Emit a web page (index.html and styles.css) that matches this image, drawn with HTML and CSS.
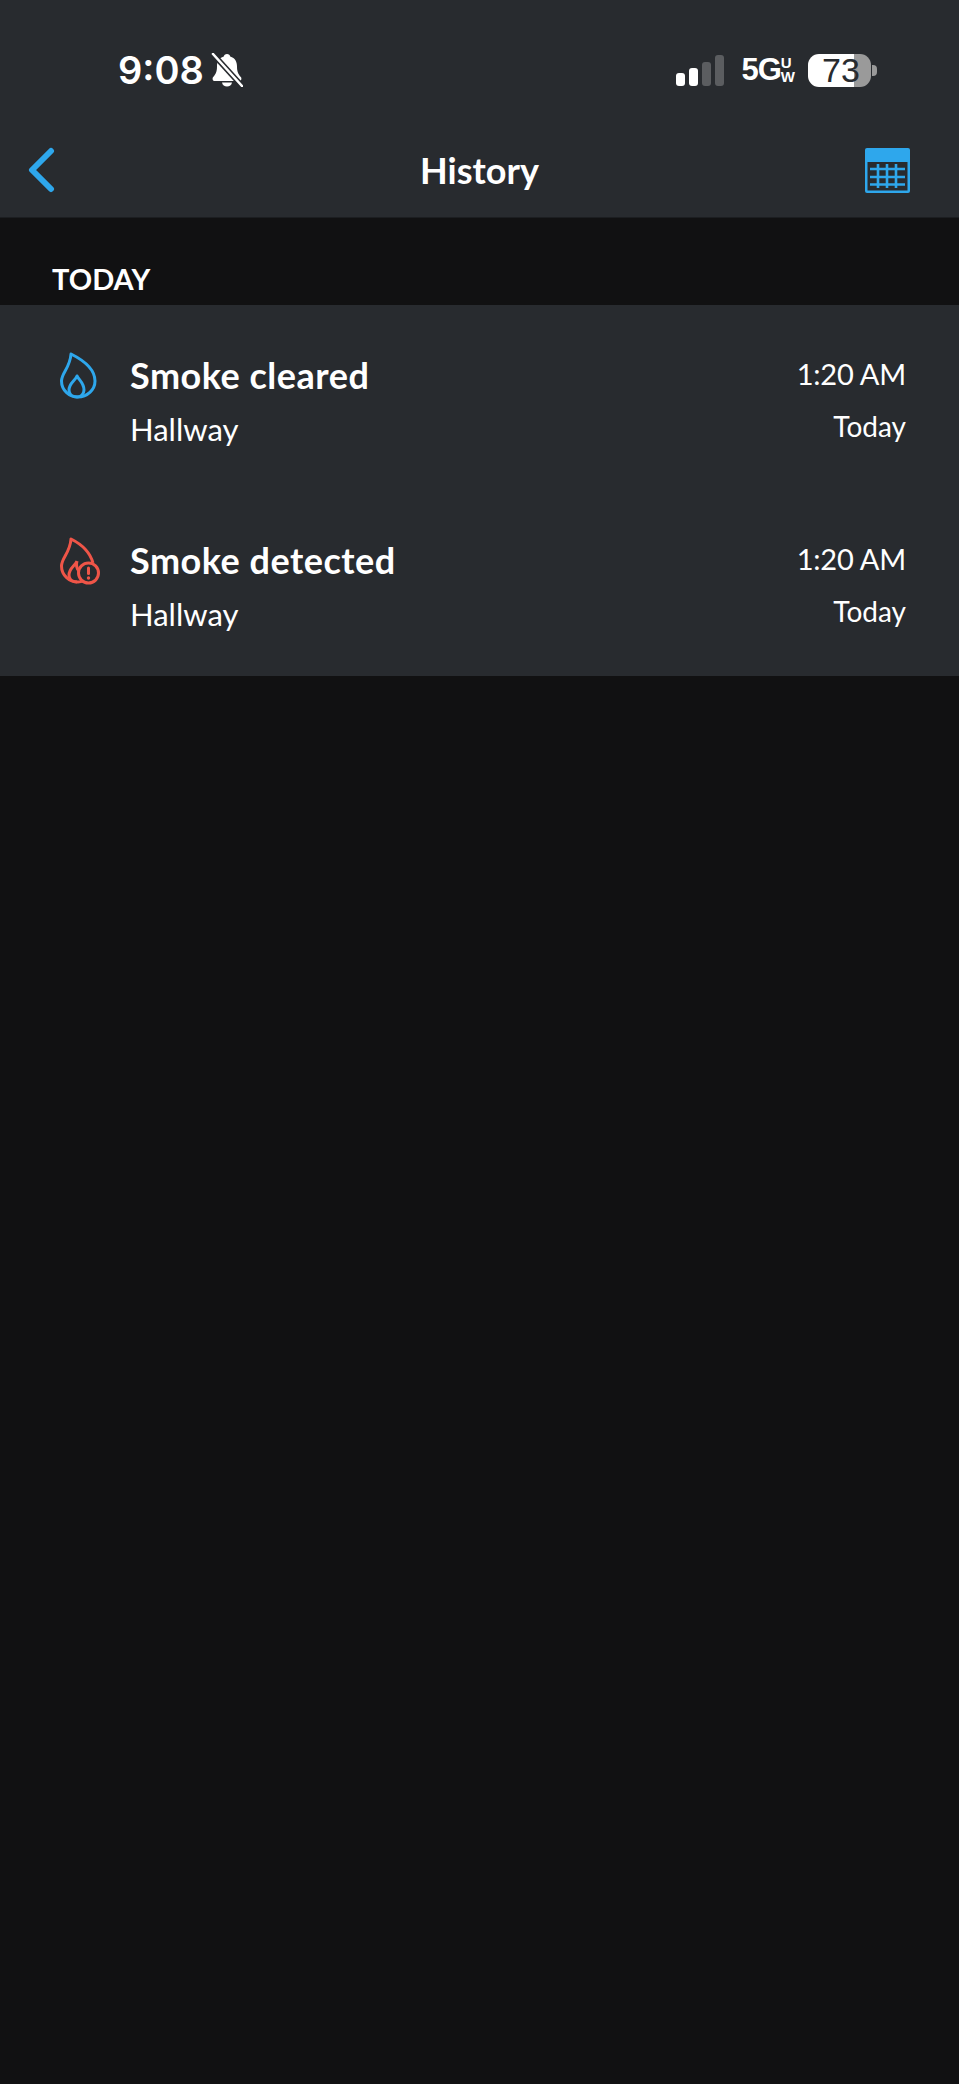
FILE: index.html
```html
<!DOCTYPE html>
<html lang="en">
<head>
  <meta charset="UTF-8">
  <meta name="viewport" content="width=device-width, initial-scale=1.0">
  <title>History</title>
  <link rel="stylesheet" href="styles.css">
</head>
<body>
  <header class="top">
    <div class="status">
      <div class="status-left">
        <span class="clock">9:08</span>
        <svg class="bell" viewBox="0 0 32 34" width="32" height="34">
          <path d="M16 1c-1.800 0-3 1-3.200 2.600C7.800 5 6 9 6 13.500c0 5-1.200 7.500-3.800 10.500C1 25.500 1.700 28 3.500 28h25c1.800 0 2.500-2.500 1.300-4C27.200 21 26 18.500 26 13.500c0-4.500-1.800-8.500-6.800-9.900C19 2 17.800 1 16 1z" fill="#fff"/>
          <path d="M11 29.500h10c-.4 2.400-2.400 4-5 4s-4.600-1.600-5-4z" fill="#fff"/>
          <path d="M2 1l29 32" stroke="#282b2f" stroke-width="5.500"/>
          <path d="M2 1l29 32" stroke="#fff" stroke-width="2.600" stroke-linecap="round"/>
        </svg>
      </div>
      <div class="status-right">
        <div class="signal">
          <span class="bar bar-1"></span>
          <span class="bar bar-2"></span>
          <span class="bar bar-3"></span>
          <span class="bar bar-4"></span>
        </div>
        <div class="network">
          <span class="network-main">5G</span>
          <span class="network-small"><span>U</span><span>W</span></span>
        </div>
        <div class="battery">
          <div class="battery-body"><span class="battery-level">73</span></div>
          <span class="battery-nub"></span>
        </div>
      </div>
    </div>
    <nav class="nav">
      <svg class="back" viewBox="0 0 28 46" width="28" height="46">
        <path d="M24 4L5 23l19 19" fill="none" stroke="#2ea7ec" stroke-width="6" stroke-linecap="round" stroke-linejoin="round"/>
      </svg>
      <h1 class="nav-title">History</h1>
      <svg class="calendar" viewBox="0 0 45 45" width="45" height="45">
        <rect x="0" y="0" width="45" height="45" rx="2" fill="#2ea7ec"/>
        <rect x="2.500" y="14" width="40" height="28.500" fill="#282b2f"/>
        <path d="M5 21h35M5 29h35M5 36.500h35M13 16v24M22 16v24M31 16v24" stroke="#2ea7ec" stroke-width="2.600" fill="none"/>
      </svg>
    </nav>
  </header>

  <h2 class="section-title">TODAY</h2>

  <ul class="events">
    <li class="event">
      <svg class="event-icon" viewBox="0 0 44 50" width="44" height="50">
        <path d="M14 4C24 9 38 18 38 31C38 40 30 47 21 47C12 47 4.500 40 4.500 31C4.500 23 13 18 14 4Z" fill="none" stroke="#2ea7ec" stroke-width="3" stroke-linejoin="round"/>
        <path d="M20 26C22 30 27 33 27 40C27 44 24 47 20 47C15 47 12 44 12 40C12 33 18 31 20 26Z" fill="none" stroke="#2ea7ec" stroke-width="3" stroke-linejoin="round"/>
      </svg>
      <div class="event-main">
        <div class="event-name">Smoke cleared</div>
        <div class="event-place">Hallway</div>
      </div>
      <div class="event-when">
        <div class="event-time">1:20 AM</div>
        <div class="event-day">Today</div>
      </div>
    </li>
    <li class="event">
      <svg class="event-icon" viewBox="0 0 44 50" width="44" height="50">
        <path d="M36 28C33 17 24 9 14 4C13 18 4.500 23 4.500 31C4.500 40 12 47 21 47C23 47 25 46.500 26 46" fill="none" stroke="#ef5548" stroke-width="3" stroke-linejoin="round"/>
        <path d="M20 26C18 31 12 33 12 40C12 44 15 47 20 47M20 26C19 30 20 34 22 36" fill="none" stroke="#ef5548" stroke-width="3" stroke-linejoin="round"/>
        <circle cx="31.500" cy="38" r="10" fill="none" stroke="#ef5548" stroke-width="3"/>
        <path d="M31.500 33v5.500" stroke="#ef5548" stroke-width="3" stroke-linecap="round"/>
        <circle cx="31.500" cy="43" r="1.700" fill="#ef5548"/>
      </svg>
      <div class="event-main">
        <div class="event-name">Smoke detected</div>
        <div class="event-place">Hallway</div>
      </div>
      <div class="event-when">
        <div class="event-time">1:20 AM</div>
        <div class="event-day">Today</div>
      </div>
    </li>
  </ul>
</body>
</html>
```

FILE: styles.css
```css
body {
  margin: 0;
  min-height: 2084px;
  background-color: #111112;
  color: #fff;
  font-family: Lato, "Liberation Sans", sans-serif;
}

.top {
  height: 218px;
  background-color: #282b2f;
  border-bottom: 1px solid #1c1e21;
  box-sizing: border-box;
}

/* Status bar */
.status {
  display: flex;
  justify-content: space-between;
  align-items: center;
  height: 40px;
  padding: 50px 82px 0 118px;
}
.status-left,
.status-right {
  display: flex;
  align-items: center;
}
.clock {
  font-family: Inter, sans-serif;
  font-weight: 600;
  font-size: 38px;
  line-height: 40px;
}
.bell {
  margin-left: 7px;
}
.signal {
  display: flex;
  align-items: flex-end;
  gap: 4px;
  height: 32px;
}
.bar {
  width: 9px;
  border-radius: 3px;
  background-color: #fff;
}
.bar-1 { height: 13px; }
.bar-2 { height: 18px; }
.bar-3 { height: 24px; background-color: #5b5d60; }
.bar-4 { height: 31px; background-color: #5b5d60; }

.network {
  display: flex;
  align-items: center;
  margin-left: 17px;
}
.network-main {
  font-family: "Liberation Sans", sans-serif;
  font-weight: 700;
  font-size: 31px;
  line-height: 32px;
  letter-spacing: -1px;
}
.network-small {
  display: flex;
  flex-direction: column;
  font-family: "Liberation Sans", sans-serif;
  font-weight: 700;
  font-size: 15px;
  line-height: 14px;
}
.battery {
  display: flex;
  align-items: center;
  margin-left: 13px;
}
.battery-body {
  width: 63px;
  height: 33px;
  border-radius: 11px;
  background: linear-gradient(to right, #fff 46px, #9a9a9a 46px);
  color: #282b2f;
  font-family: "Liberation Sans", sans-serif;
  font-size: 34px;
  line-height: 33px;
  box-sizing: border-box;
  padding-left: 14px;
}
.battery-nub {
  width: 5px;
  height: 11px;
  margin-left: 1px;
  border-radius: 0 4px 4px 0;
  background-color: #9a9a9a;
}

/* Nav */
.nav {
  display: grid;
  grid-template-columns: 1fr auto 1fr;
  align-items: center;
  height: 60px;
  padding: 50px 49px 0;
}
.back {
  margin-left: -22px;
}
.calendar {
  justify-self: end;
}
.nav-title {
  margin: 0;
  font-size: 36px;
  font-weight: 700;
}

/* List */
.section-title {
  margin: 0;
  height: 87px;
  box-sizing: border-box;
  padding: 44px 0 0 52px;
  font-size: 29px;
  line-height: 34px;
  font-weight: 700;
}
.events {
  list-style: none;
  margin: 0;
  padding: 0;
  height: 371px;
  background-color: #282b2f;
}
.event {
  display: flex;
  height: 185px;
  box-sizing: border-box;
  padding: 45px 53px 0 57px;
}
.event-icon {
  flex: none;
}
.event-main {
  flex: 1;
  margin-left: 29px;
  padding-top: 5px;
}
.event-name {
  font-size: 36px;
  line-height: 40px;
  font-weight: 700;
  letter-spacing: .5px;
}
.event-place {
  margin-top: 16px;
  font-size: 31px;
  line-height: 36px;
}
.event-when {
  text-align: right;
  padding-top: 4px;
}
.event-time {
  font-size: 29px;
  line-height: 40px;
  letter-spacing: -.2px;
}
.event-day {
  margin-top: 15px;
  font-size: 28px;
  line-height: 34px;
}
```
